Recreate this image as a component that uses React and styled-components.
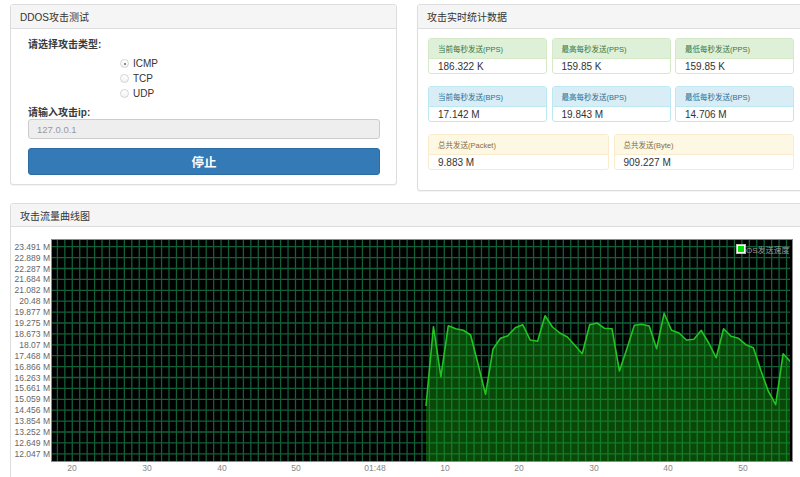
import React from 'react';
import styled, { createGlobalStyle } from 'styled-components';

const GlobalStyle = createGlobalStyle`
  html, body {
    margin: 0;
    padding: 0;
    overflow: hidden;
    background: #fff;
  }
  body {
    font-family: "Liberation Sans", "Noto Sans CJK SC", sans-serif;
    color: #333;
  }
`;

const Page = styled.div`
  width: 805px;
  padding: 4px 0 0 10px;
`;

const TopRow = styled.div`
  display: grid;
  grid-template-columns: 387px 398px;
  column-gap: 20px;
  align-items: start;
`;

const Panel = styled.div`
  background: #fff;
  border: 1px solid #ddd;
  border-radius: 3px;
  box-shadow: 0 1px 1px rgba(0, 0, 0, 0.05);
  margin-top: ${p => p.$top || 0}px;
  overflow: hidden;
`;

const PanelHeading = styled.div`
  height: ${p => p.$h || 23}px;
  display: flex;
  align-items: center;
  padding: 0 9px;
  background: #f5f5f5;
  border-bottom: 1px solid #ddd;
  font-size: 10px;
  color: #333;
`;

const FormBody = styled.div`
  padding: 10px 16px 9px 17px;
`;

const FieldLabel = styled.div`
  font-size: 10px;
  font-weight: bold;
  line-height: 12px;
  color: #3a3a3a;
  margin-top: ${p => p.$top || 0}px;
`;

const RadioGroup = styled.div`
  margin: 5px 0 0 92px;
`;

const RadioRow = styled.label`
  display: flex;
  align-items: center;
  gap: 4px;
  height: 15px;
  font-size: 10px;
  color: #333;
`;

const RadioDot = styled.span`
  position: relative;
  width: 7px;
  height: 7px;
  border-radius: 50%;
  border: 1px solid #d4d4d4;
  background: linear-gradient(#fff, #f2f2f2);

  &::after {
    content: '';
    display: ${p => (p.$checked ? 'block' : 'none')};
    position: absolute;
    left: 2.5px;
    top: 2.5px;
    width: 2px;
    height: 2px;
    border-radius: 50%;
    background: #666;
  }
`;

const IpInput = styled.div`
  height: 18px;
  display: flex;
  align-items: center;
  padding: 0 8px;
  margin-top: 0;
  background: #eee;
  border: 1px solid #ccc;
  border-radius: 3px;
  font-size: 9.5px;
  color: #999;
`;

const StopButton = styled.button`
  display: block;
  width: 100%;
  height: 27px;
  margin-top: 9px;
  border: 1px solid #2e6da4;
  border-radius: 3px;
  background: #337ab7;
  color: #fff;
  font-family: inherit;
  font-size: 12.5px;
  font-weight: bold;
`;

const StatsBody = styled.div`
  display: flex;
  flex-direction: column;
  gap: 12px;
  padding: 9px 20px 20px 10px;
`;

const StatRow = styled.div`
  display: grid;
  grid-template-columns: repeat(${p => p.$cols}, 1fr);
  column-gap: ${p => (p.$cols === 3 ? 4.5 : 5)}px;
`;

const variants = {
  success: { bg: '#dff0d8', fg: '#3c763d', border: '#d6e9c6' },
  info: { bg: '#d9edf7', fg: '#31708f', border: '#bce8f1' },
  warning: { bg: '#fcf8e3', fg: '#8a6d3b', border: '#faebcc' },
};

const StatBox = styled.div`
  border: 1px solid ${p => variants[p.$kind].border};
  border-radius: 3px;
  overflow: hidden;
`;

const StatHead = styled.div`
  height: 19px;
  display: flex;
  align-items: center;
  padding: 0 9px;
  background: ${p => variants[p.$kind].bg};
  color: ${p => variants[p.$kind].fg};
  border-bottom: 1px solid ${p => variants[p.$kind].border};
  font-size: 7.5px;
`;

const StatValue = styled.div`
  height: 14px;
  display: flex;
  align-items: center;
  padding: 0 9px;
  font-size: 10px;
  color: #333;
`;

const ChartBody = styled.div`
  height: 260px;
`;

const ChartSvg = styled.svg`
  display: block;
  font-family: "Liberation Sans", "Noto Sans CJK SC", sans-serif;
`;

const stats = [
  {
    kind: 'success',
    items: [
      ['当前每秒发送(PPS)', '186.322 K'],
      ['最高每秒发送(PPS)', '159.85 K'],
      ['最低每秒发送(PPS)', '159.85 K'],
    ],
  },
  {
    kind: 'info',
    items: [
      ['当前每秒发送(BPS)', '17.142 M'],
      ['最高每秒发送(BPS)', '19.843 M'],
      ['最低每秒发送(BPS)', '14.706 M'],
    ],
  },
  {
    kind: 'warning',
    items: [
      ['总共发送(Packet)', '9.883 M'],
      ['总共发送(Byte)', '909.227 M'],
    ],
  },
];

const yLabels = [
  '23.491 M', '22.889 M', '22.287 M', '21.684 M', '21.082 M', '20.48 M', '19.877 M',
  '19.275 M', '18.673 M', '18.07 M', '17.468 M', '16.866 M', '16.263 M', '15.661 M',
  '15.059 M', '14.456 M', '13.854 M', '13.252 M', '12.649 M', '12.047 M',
];

const xLabels = [
  [72, '20'], [147, '30'], [222, '40'], [296, '50'], [375, '01:48'],
  [445, '10'], [519, '20'], [594, '30'], [668, '40'], [743, '50'],
];

// sampled y positions (page coords) of the traffic line, one per second
const series = [
  405, 325.7, 375.7, 324.7, 327.7, 329.3, 334, 363.3, 393.3, 348.3,
  337.3, 334.7, 326.7, 323.7, 339, 340.3, 314.7, 326, 332, 336,
  344.3, 352.7, 323.7, 322, 327.3, 327.7, 370, 347.7, 324.3, 323.3,
  325, 347.7, 312.3, 329.3, 332, 339, 338.3, 329.3, 342, 356.7,
  327.7, 335.3, 337.3, 343.7, 346.7, 369.3, 390, 403.7, 352.7, 360.7,
];

const PLOT = { left: 52, right: 792, top: 239, bottom: 460 };
const STEP = 7.44;

function TrafficChart() {
  const vLines = [];
  for (let x = 57.4; x < PLOT.right; x += STEP) vLines.push(x);
  const hLines = yLabels.map((_, i) => 245.7 + i * 10.9);
  const pts = series.map((y, i) => [426 + i * STEP, y]);
  const line = pts.map(p => p.join(',')).join(' ');
  const area = `${line} ${pts[pts.length - 1][0]},${PLOT.bottom} ${pts[0][0]},${PLOT.bottom}`;

  return (
    <ChartSvg width="804" height="260" viewBox="11 226 804 260">
      <defs>
        <clipPath id="plotClip">
          <rect x={PLOT.left} y={PLOT.top} width={PLOT.right - PLOT.left - 2} height={PLOT.bottom - PLOT.top} />
        </clipPath>
      </defs>
      <rect x={PLOT.left} y={PLOT.top} width={PLOT.right - PLOT.left} height={PLOT.bottom - PLOT.top} fill="#000" />
      <g clipPath="url(#plotClip)">
        {vLines.map(x => (
          <line key={`v${x}`} x1={x} y1={PLOT.top} x2={x} y2={PLOT.bottom} stroke="#135f37" strokeWidth="1.3" />
        ))}
        {hLines.map(y => (
          <line key={`h${y}`} x1={PLOT.left} y1={y} x2={PLOT.right} y2={y} stroke="#135f37" strokeWidth="1.3" />
        ))}
        <polygon points={area} fill="rgba(20,160,20,0.45)" />
        <polyline points={line} fill="none" stroke="#22c422" strokeWidth="1.6" strokeLinejoin="round" />
        <rect x="736.5" y="243.5" width="9" height="9" fill="#fff" stroke="#bbb" strokeWidth="1" />
        <rect x="738" y="245" width="6" height="6" fill="#00e000" />
        <text x="746" y="251.5" fontSize="8" fill="#999">OS发送速度</text>
      </g>
      <rect x={PLOT.left - 0.5} y={PLOT.top - 0.5} width={PLOT.right - PLOT.left + 1} height={PLOT.bottom - PLOT.top + 1} fill="none" stroke="#8a8a8a" strokeWidth="1" />
      {yLabels.map((t, i) => (
        <text key={t} x="50" y={hLines[i] + 3} textAnchor="end" fontSize="8.5" fill="#666">{t}</text>
      ))}
      {xLabels.map(([x, t]) => (
        <text key={`${x}${t}`} x={x} y="470" textAnchor="middle" fontSize="8.5" fill="#888">{t}</text>
      ))}
    </ChartSvg>
  );
}

export default function App() {
  return (
    <Page>
      <GlobalStyle />
      <TopRow>
        <Panel>
          <PanelHeading>DDOS攻击测试</PanelHeading>
          <FormBody>
            <FieldLabel>请选择攻击类型:</FieldLabel>
            <RadioGroup>
              <RadioRow><RadioDot $checked />ICMP</RadioRow>
              <RadioRow><RadioDot />TCP</RadioRow>
              <RadioRow><RadioDot />UDP</RadioRow>
            </RadioGroup>
            <FieldLabel $top={6}>请输入攻击ip:</FieldLabel>
            <IpInput>127.0.0.1</IpInput>
            <StopButton>停止</StopButton>
          </FormBody>
        </Panel>
        <Panel>
          <PanelHeading>攻击实时统计数据</PanelHeading>
          <StatsBody>
            {stats.map(row => (
              <StatRow key={row.kind} $cols={row.items.length}>
                {row.items.map(([label, value]) => (
                  <StatBox key={label} $kind={row.kind}>
                    <StatHead $kind={row.kind}>{label}</StatHead>
                    <StatValue>{value}</StatValue>
                  </StatBox>
                ))}
              </StatRow>
            ))}
          </StatsBody>
        </Panel>
      </TopRow>
      <Panel $top={12}>
        <PanelHeading $h={22}>攻击流量曲线图</PanelHeading>
        <ChartBody>
          <TrafficChart />
        </ChartBody>
      </Panel>
    </Page>
  );
}
